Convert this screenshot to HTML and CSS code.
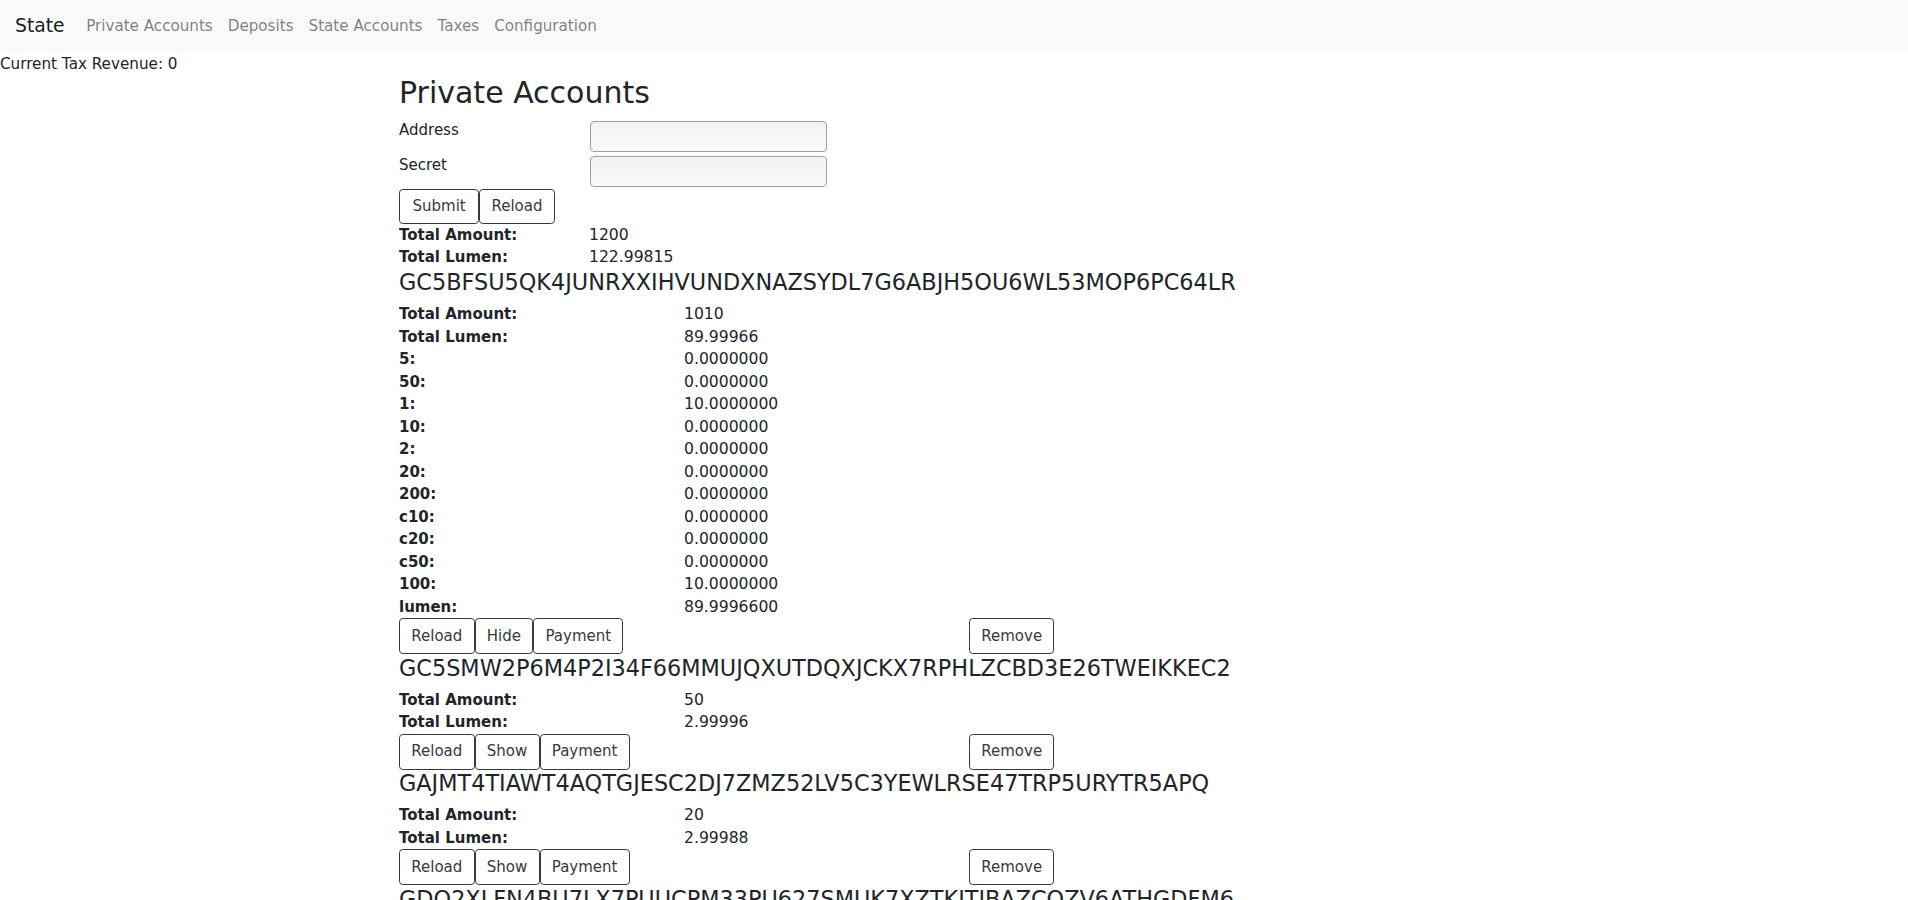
FILE: index.html
```html
<!DOCTYPE html>
<html lang="en">
<head>
<meta charset="utf-8">
<title>State</title>
<link rel="stylesheet" href="styles.css">
</head>
<body>
<nav class="navbar">
  <a class="brand" href="#">State</a>
  <ul class="nav">
    <li><a class="nav-link" href="#">Private Accounts</a></li>
    <li><a class="nav-link" href="#">Deposits</a></li>
    <li><a class="nav-link" href="#">State Accounts</a></li>
    <li><a class="nav-link" href="#">Taxes</a></li>
    <li><a class="nav-link" href="#">Configuration</a></li>
  </ul>
</nav>
<div class="revenue">Current Tax Revenue: 0</div>
<main class="container">
  <h2 class="title">Private Accounts</h2>
  <form class="form">
    <div class="form-row"><label class="form-label">Address</label><input class="input" type="text"></div>
    <div class="form-row"><label class="form-label">Secret</label><input class="input" type="text"></div>
    <div class="btns"><button class="btn btn-submit" type="button">Submit</button><button class="btn" type="button">Reload</button></div>
  </form>
  <div class="kv kv-summary"><b>Total Amount:</b><span>1200</span></div>
  <div class="kv kv-summary"><b>Total Lumen:</b><span>122.99815</span></div>

  <section class="account">
    <h4 class="addr">GC5BFSU5QK4JUNRXXIHVUNDXNAZSYDL7G6ABJH5OU6WL53MOP6PC64LR</h4>
    <div class="kv"><b>Total Amount:</b><span>1010</span></div>
    <div class="kv"><b>Total Lumen:</b><span>89.99966</span></div>
    <div class="kv"><b>5:</b><span>0.0000000</span></div>
    <div class="kv"><b>50:</b><span>0.0000000</span></div>
    <div class="kv"><b>1:</b><span>10.0000000</span></div>
    <div class="kv"><b>10:</b><span>0.0000000</span></div>
    <div class="kv"><b>2:</b><span>0.0000000</span></div>
    <div class="kv"><b>20:</b><span>0.0000000</span></div>
    <div class="kv"><b>200:</b><span>0.0000000</span></div>
    <div class="kv"><b>c10:</b><span>0.0000000</span></div>
    <div class="kv"><b>c20:</b><span>0.0000000</span></div>
    <div class="kv"><b>c50:</b><span>0.0000000</span></div>
    <div class="kv"><b>100:</b><span>10.0000000</span></div>
    <div class="kv"><b>lumen:</b><span>89.9996600</span></div>
    <div class="actions">
      <div class="btns"><button class="btn" type="button">Reload</button><button class="btn" type="button">Hide</button><button class="btn" type="button">Payment</button></div>
      <div class="btns"><button class="btn" type="button">Remove</button></div>
    </div>
  </section>

  <section class="account">
    <h4 class="addr">GC5SMW2P6M4P2I34F66MMUJQXUTDQXJCKX7RPHLZCBD3E26TWEIKKEC2</h4>
    <div class="kv"><b>Total Amount:</b><span>50</span></div>
    <div class="kv"><b>Total Lumen:</b><span>2.99996</span></div>
    <div class="actions">
      <div class="btns"><button class="btn" type="button">Reload</button><button class="btn" type="button">Show</button><button class="btn" type="button">Payment</button></div>
      <div class="btns"><button class="btn" type="button">Remove</button></div>
    </div>
  </section>

  <section class="account">
    <h4 class="addr">GAJMT4TIAWT4AQTGJESC2DJ7ZMZ52LV5C3YEWLRSE47TRP5URYTR5APQ</h4>
    <div class="kv"><b>Total Amount:</b><span>20</span></div>
    <div class="kv"><b>Total Lumen:</b><span>2.99988</span></div>
    <div class="actions">
      <div class="btns"><button class="btn" type="button">Reload</button><button class="btn" type="button">Show</button><button class="btn" type="button">Payment</button></div>
      <div class="btns"><button class="btn" type="button">Remove</button></div>
    </div>
  </section>

  <section class="account">
    <h4 class="addr">GDQ2XLFN4BU7LX7PUUCPM33PU627SMUK7XZTKITIBAZCQZV6ATHGDFM6</h4>
    <div class="kv"><b>Total Amount:</b><span>10</span></div>
    <div class="kv"><b>Total Lumen:</b><span>2.99990</span></div>
    <div class="actions">
      <div class="btns"><button class="btn" type="button">Reload</button><button class="btn" type="button">Show</button><button class="btn" type="button">Payment</button></div>
      <div class="btns"><button class="btn" type="button">Remove</button></div>
    </div>
  </section>
</main>
</body>
</html>
```
FILE: styles.css
```css
html {
  scrollbar-width: none;
}
html::-webkit-scrollbar {
  display: none;
}
body {
  margin: 0;
  font-family: "DejaVu Sans", sans-serif;
  font-size: 15px;
  line-height: 1.5;
  color: #212529;
  background: #fff;
}
.navbar {
  display: flex;
  align-items: center;
  padding: 7.5px 15px;
  background: #f8f9fa;
}
.brand {
  font-size: 18.75px;
  line-height: 28.125px;
  padding: 4.6875px 0;
  margin-right: 14px;
  color: rgba(0, 0, 0, 0.9);
  text-decoration: none;
}
.nav {
  display: flex;
  list-style: none;
  margin: 0;
  padding: 0;
}
.nav-link {
  display: block;
  padding: 7.5px 7.5px;
  font-size: 15.15px;
  line-height: 22.5px;
  color: rgba(0, 0, 0, 0.5);
  text-decoration: none;
}
.revenue {
  font-size: 15.2px;
  line-height: 22.5px;
}
.container {
  width: 1110px;
  margin: 0 auto;
}
.title {
  font-size: 30px;
  font-weight: 500;
  line-height: 1.2;
  margin: 0 0 7.5px;
}
.form {
  margin: 0;
}
.form-row {
  display: flex;
  align-items: flex-start;
}
.form-label {
  width: 191px;
  flex: none;
}
.input {
  box-sizing: border-box;
  width: 237px;
  height: 31px;
  margin: 2px 0;
  padding: 2px 6px;
  border: 1px solid #9f9f9f;
  border-radius: 4px;
  background: linear-gradient(#f2f2f2, #fafafa);
  font: inherit;
}
.btns {
  display: flex;
}
.btn {
  font-family: inherit;
  font-size: 15px;
  line-height: 22.5px;
  padding: 5.25px 11.25px;
  color: #343a40;
  background: transparent;
  border: 1px solid #343a40;
  border-radius: 3.75px;
  cursor: pointer;
}
.btn-submit {
  padding-left: 12.5px;
  padding-right: 12.5px;
}
.actions .btn {
  padding-top: 5.75px;
  padding-bottom: 5.75px;
}
.kv {
  display: grid;
  grid-template-columns: 285px 1fr;
  line-height: 22.5px;
}
.kv-summary {
  grid-template-columns: 190px 1fr;
}
.kv b {
  font-weight: 700;
}
.kv span {
  font-size: 15.6px;
}
.addr {
  font-size: 22.37px;
  font-weight: 500;
  line-height: 27px;
  margin: 0.5px 0 7px;
}
.actions {
  display: grid;
  grid-template-columns: 570px 1fr;
}
```
